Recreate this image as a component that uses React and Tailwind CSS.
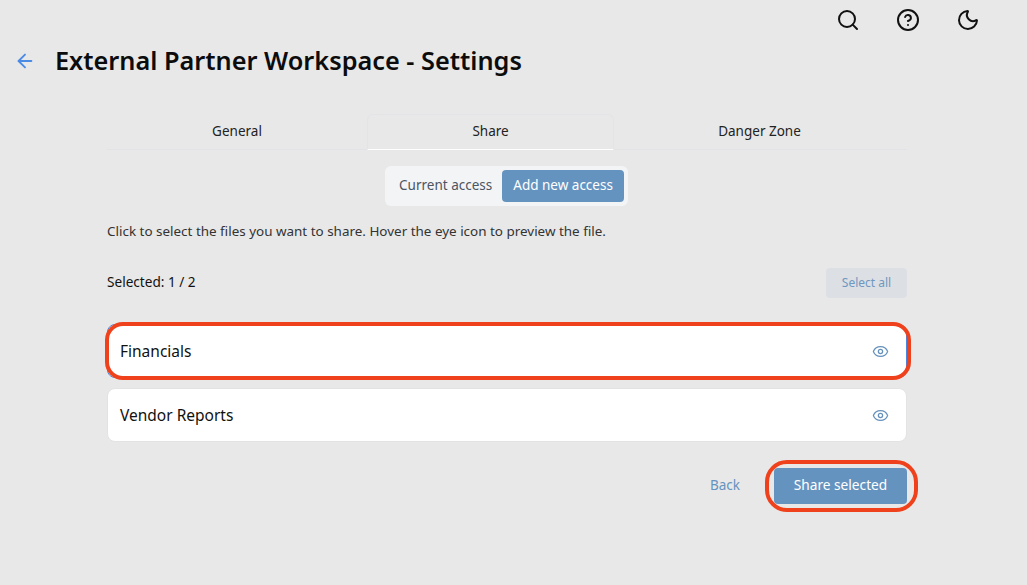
import React from "react";
import { ArrowLeft, Search, CircleHelp, Moon, Eye } from "lucide-react";

const font = "font-['Noto_Sans',sans-serif]";

const FileRow = ({ name, selected }) => {
  return (
    <div
      className={`relative flex h-[54px] items-center justify-between rounded-lg bg-white pl-[12px] pr-[17px] ${
        selected ? "border border-[#4a86e0]" : "border border-[#e2e3e5]"
      }`}
    >
      <span className="pt-[1px] text-[15.5px] text-[#111]">{name}</span>
      <Eye size={17} strokeWidth={1.8} className="text-[#6592bd]" />
      {selected && (
        <div className="absolute -bottom-[3px] -left-[3px] -right-[5px] -top-[3px] rounded-[18px] border-[4px] border-[#ef411b]" />
      )}
    </div>
  );
};

export default function App() {
  return (
    <div className={`${font} flex h-[585px] w-[1027px] flex-col overflow-hidden bg-[#e8e8e8]`}>
      <div className="flex h-[40px] items-center justify-end gap-[36px] pr-[47px] text-[#111]">
        <Search size={24} strokeWidth={2} />
        <CircleHelp size={24} strokeWidth={2} />
        <Moon size={24} strokeWidth={2} />
      </div>

      <div className="flex h-[42px] items-center pl-[14px]">
        <ArrowLeft size={22} strokeWidth={2} className="text-[#4a8be5]" />
        <h1 className="ml-[19px] text-[25.3px] font-semibold text-[#0c0c0c]">
          External Partner Workspace - Settings
        </h1>
      </div>

      <div className="ml-[107px] mt-[32px] w-[800px]">
        <div className="flex h-[36px] border-b border-[#e2e3e6] pr-[2px] text-[13.5px] text-[#222]">
          <div className="flex w-[260px] items-center justify-center">General</div>
          <div className="-mb-px flex w-[247px] items-center justify-center rounded-t-md border border-[#e3e3e8] border-b-white pb-[2px]">
            Share
          </div>
          <div className="flex flex-1 items-center justify-center">Danger Zone</div>
        </div>

        <div className="mt-[16px] flex justify-center pr-[1px]">
          <div className="flex h-[40px] items-center rounded-md bg-[#f3f4f6] pl-[14px] pr-[4px] text-[13.5px]">
            <span className="mr-[10px] pb-[2px] text-[#4b5563]">Current access</span>
            <span className="flex h-[32px] items-center rounded bg-[#6593bf] px-[11px] pb-[2px] text-white">
              Add new access
            </span>
          </div>
        </div>

        <p className="mt-[16px] text-[13.45px] leading-[18px] text-[#333]">
          Click to select the files you want to share. Hover the eye icon to preview the file.
        </p>

        <div className="mt-[28px] flex h-[30px] items-center justify-between">
          <span className="pb-[2px] text-[13.6px] text-[#111]">Selected: 1 / 2</span>
          <button className="h-[30px] w-[81px] rounded bg-[#dcdfe4] text-[12px] text-[#6f97c0]">
            Select all
          </button>
        </div>

        <div className="mt-[26px] flex flex-col gap-[10px]">
          <FileRow name="Financials" selected />
          <FileRow name="Vendor Reports" />
        </div>

        <div className="relative mt-[26px] flex h-[36px] items-center justify-end">
          <button className="mr-[34px] pb-[2px] text-[13.5px] text-[#6593bf]">Back</button>
          <button className="relative h-[36px] w-[133px] rounded bg-[#6593bf] pb-[2px] text-[13.7px] text-white">
            Share selected
            <span className="absolute -left-[9px] -top-[8px] h-[52px] w-[153px] rounded-[22px] border-[4px] border-[#ef411b]" />
          </button>
        </div>
      </div>
    </div>
  );
}
